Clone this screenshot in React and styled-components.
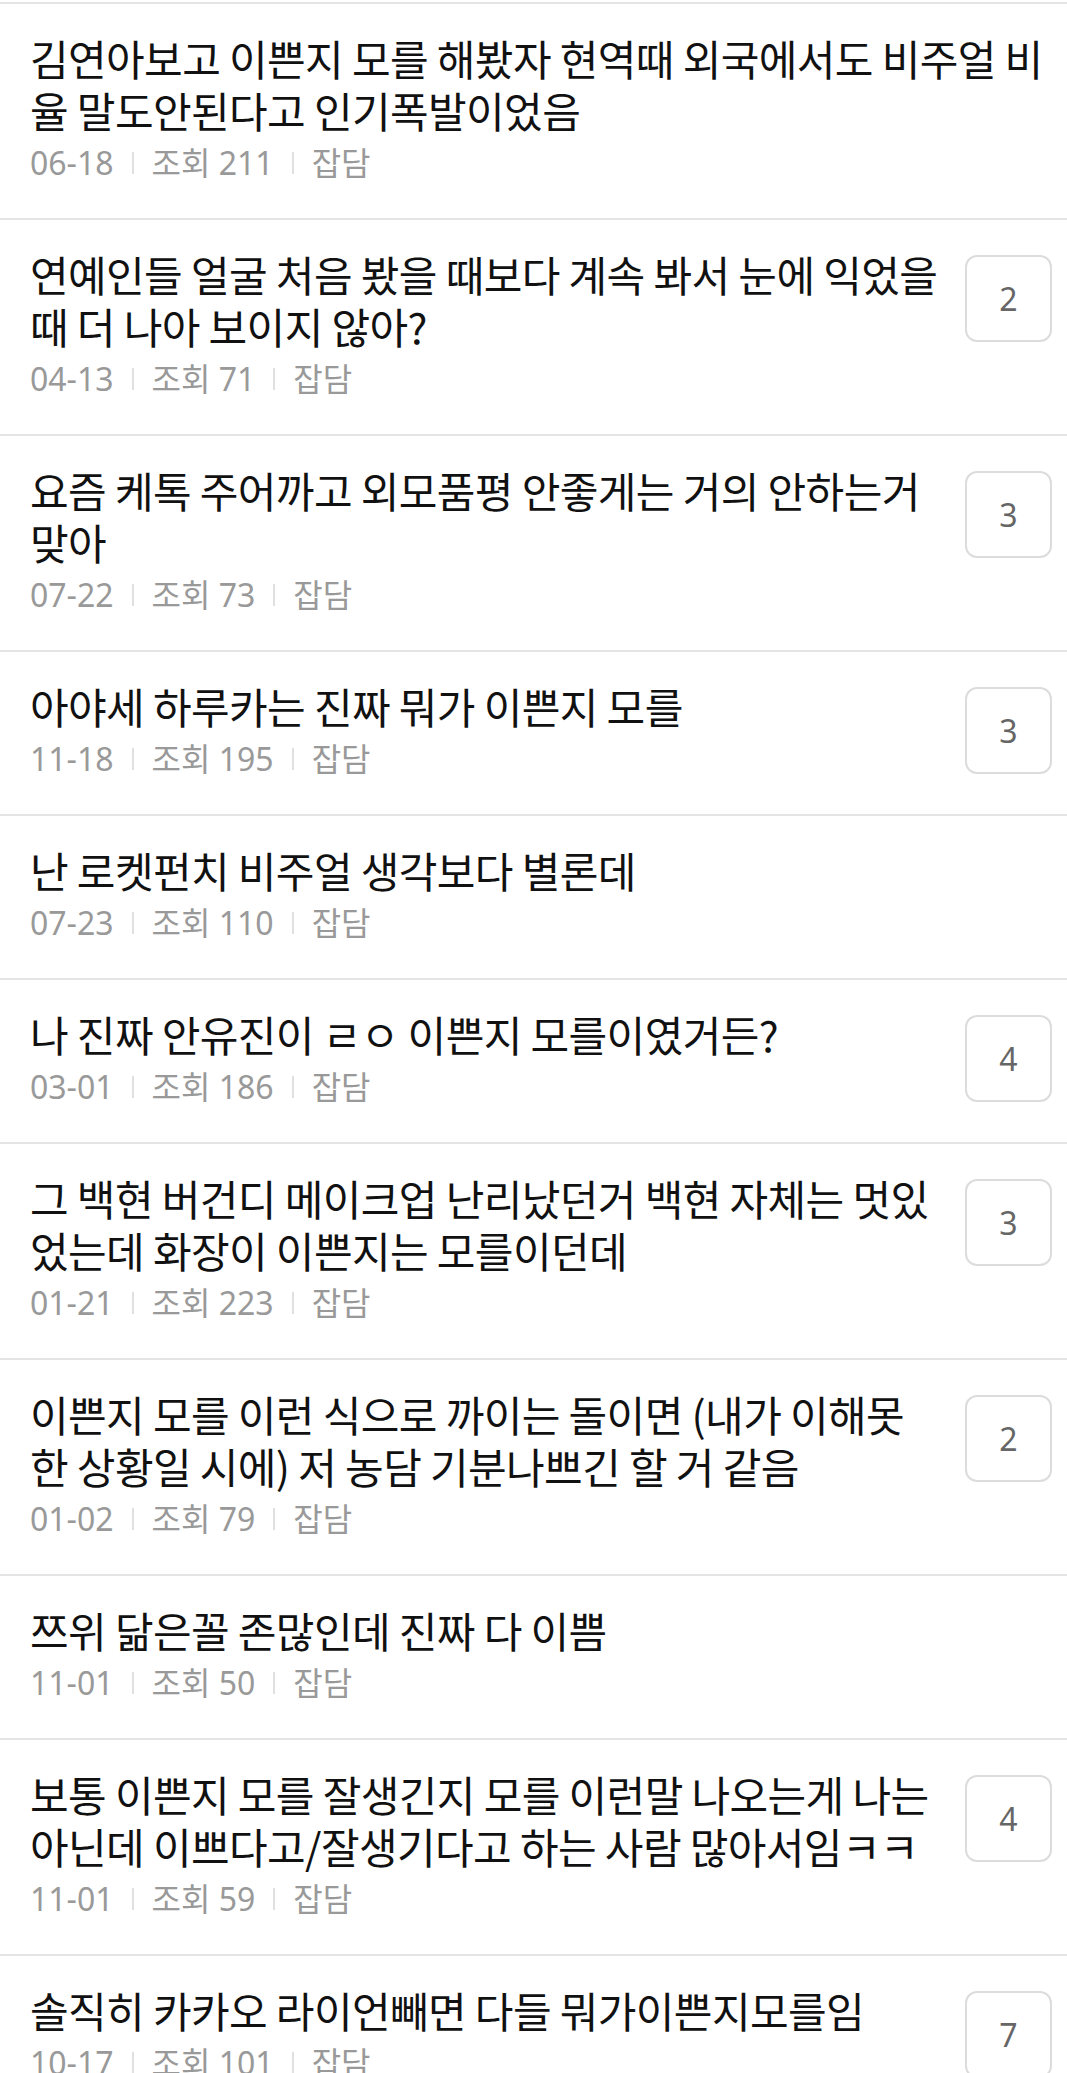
import React from 'react'
import styled, { createGlobalStyle } from 'styled-components';

const posts = [
  { lines: ['김연아보고 이쁜지 모를 해봤자 현역때 외국에서도 비주얼 비', '율 말도안된다고 인기폭발이었음'], date: '06-18', views: 211 },
  { lines: ['연예인들 얼굴 처음 봤을 때보다 계속 봐서 눈에 익었을', '때 더 나아 보이지 않아?'], date: '04-13', views: 71, comments: 2 },
  { lines: ['요즘 케톡 주어까고 외모품평 안좋게는 거의 안하는거', '맞아'], date: '07-22', views: 73, comments: 3 },
  { lines: ['아야세 하루카는 진짜 뭐가 이쁜지 모를'], date: '11-18', views: 195, comments: 3 },
  { lines: ['난 로켓펀치 비주얼 생각보다 별론데'], date: '07-23', views: 110 },
  { lines: ['나 진짜 안유진이 ㄹㅇ 이쁜지 모를이였거든?'], date: '03-01', views: 186, comments: 4 },
  { lines: ['그 백현 버건디 메이크업 난리났던거 백현 자체는 멋있', '었는데 화장이 이쁜지는 모를이던데'], date: '01-21', views: 223, comments: 3 },
  { lines: ['이쁜지 모를 이런 식으로 까이는 돌이면 (내가 이해못', '한 상황일 시에) 저 농담 기분나쁘긴 할 거 같음'], date: '01-02', views: 79, comments: 2 },
  { lines: ['쯔위 닮은꼴 존많인데 진짜 다 이쁨'], date: '11-01', views: 50 },
  { lines: ['보통 이쁜지 모를 잘생긴지 모를 이런말 나오는게 나는', '아닌데 이쁘다고/잘생기다고 하는 사람 많아서임ㅋㅋ'], date: '11-01', views: 59, comments: 4 },
  { lines: ['솔직히 카카오 라이언빼면 다들 뭐가이쁜지모를임'], date: '10-17', views: 101, comments: 7 },
];

function App() {
  return (
    <>
      <GlobalStyle />
      <List>
        {posts.map((post, index) => (
          <Item key={index}>
            <Content>
              <Title>
                {post.lines.map((line, i) => (
                  <Line key={i}>{line}</Line>
                ))}
              </Title>
              <Meta>
                <span>{post.date}</span>
                <Sep />
                <span>조회 {post.views}</span>
                <Sep />
                <span>잡담</span>
              </Meta>
            </Content>
            {post.comments && <Badge>{post.comments}</Badge>}
          </Item>
        ))}
      </List>
    </>
  )
}

export default App


// ====================
// Styled Components
// ====================

const GlobalStyle = createGlobalStyle`
  html, body {
    margin: 0;
    padding: 0;
    background: #fff;
    overflow: hidden;
  }
  body {
    font-family: 'Noto Sans CJK KR', 'Noto Sans', sans-serif;
  }
`;

const List = styled.ul`
  list-style: none;
  margin: 2px 0 0;
  padding: 0;
  border-top: 2px solid #e4e4e4;
`;

const Item = styled.li`
  display: flex;
  align-items: flex-start;
  padding: 28px 15px 35px 30px;
  border-bottom: 2px solid #e4e4e4;
`;

const Content = styled.div`
  flex: 1;
  min-width: 0;
`;

const Title = styled.div`
  font-family: 'Noto Sans CJK KR', sans-serif;
  font-size: 42px;
  line-height: 52px;
  letter-spacing: -0.6px;
  color: #111;
`;

const Line = styled.span`
  display: block;
  white-space: nowrap;
`;

const Meta = styled.div`
  display: flex;
  align-items: center;
  margin-top: 7px;
  font-family: 'Noto Sans', 'Noto Sans CJK KR', sans-serif;
  font-size: 32px;
  line-height: 40px;
  color: #999;
  white-space: nowrap;
`;

const Sep = styled.span`
  width: 2px;
  height: 22px;
  margin: 0 18px;
  background: #e0e0e0;
`;

const Badge = styled.div`
  flex: none;
  width: 83px;
  height: 83px;
  margin-top: 7px;
  margin-left: 20px;
  border: 2px solid #dcdcdc;
  border-radius: 12px;
  display: flex;
  align-items: center;
  justify-content: center;
  font-family: 'Noto Sans', sans-serif;
  font-size: 32px;
  color: #666;
`;
